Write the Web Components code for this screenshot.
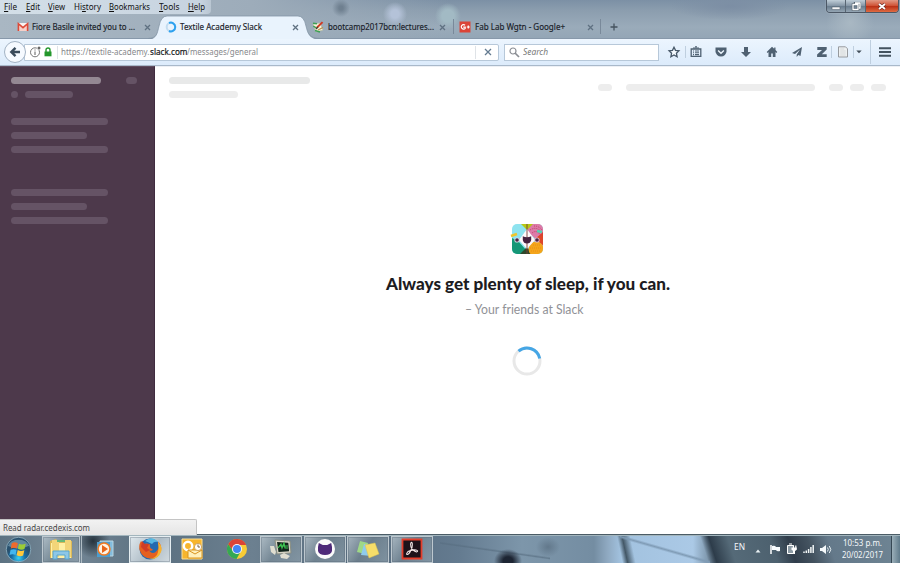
<!DOCTYPE html>
<html lang="en"><head><meta charset="utf-8"><title>Textile Academy Slack</title>
<style>html,body{margin:0;width:900px;height:563px;overflow:hidden;background:#fff;font-family:"Noto Sans","Open Sans",sans-serif}</style></head>
<body><desktop-screen></desktop-screen>
<script>
const define = (name, html, after) => customElements.define(name, class extends HTMLElement {
  connectedCallback() {
    if (this.shadowRoot) return;
    const t = document.createElement('template');
    t.innerHTML = html;
    this.attachShadow({mode:'open'}).append(t.content.cloneNode(true));
    if (after) after(this, this.shadowRoot);
  }
});

/* A single-line label condensed or widened to fill a given width. */
define('fit-text', `<style>:host{display:block;flex:none;white-space:nowrap}span{display:inline-block;transform-origin:0 50%}::slotted(u){text-underline-offset:1px;text-decoration-thickness:1px}</style><span><slot></slot></span>`, (h, r) => {
  const w = +h.getAttribute('w'), s = r.querySelector('span');
  h.style.width = w + 'px';
  s.style.transform = `scaleX(${w / s.getBoundingClientRect().width})`;
});

const icons = {
  close:['0 0 7 7','<path d="M1 1l5 5M6 1L1 6" stroke="#5f7182" stroke-width="1.3"/>'],
  stop:['0 0 8 8','<path d="M1 1l6 6M7 1L1 7" stroke="#647b90" stroke-width="1.3"/>'],
  gmail:['0 0 12 10','<path fill="#f8f4f2" d="M1 1h10v8H1z"/><path fill="#f5d0c9" d="M2 2l4 4 4-4v7H2z"/><path d="M1.4 9V1.7L6 5.7l4.6-4V9" fill="none" stroke="#dd4b39" stroke-width="1.6"/>'],
  spin:['0 0 12 12','<circle cx="6" cy="6" r="4.3" fill="none" stroke="#c3dcef" stroke-width="2"/><path d="M4 2A4.4 4.4 0 1 1 4 10" fill="none" stroke="#2da1ef" stroke-width="2"/>'],
  wiki:['0 0 12 12','<path fill="#f8f5dd" stroke="#b9bda0" stroke-width=".7" d="M1 3l7-1 3 7-7 2z"/><path d="M1 2.2l4 .6M1.3 5.2l3.4 2M3 9.5l5 1.5" stroke="#3fa056" fill="none" stroke-width="1.5"/><path d="M5 6.5l5.6-5.4" stroke="#d13a24" stroke-width="1.9"/><path d="M4 8l2-2" stroke="#49382d" stroke-width="1.3"/><path d="M6 9l5-2.5" stroke="#b78e4c" stroke-width="1.3"/>'],
  gplus:['0 0 12 12','<path fill="#db4437" d="M.5.5h11v11H.5z"/><path d="M6 4.3a2.2 2.2 0 1 0 .2 3V6.2H4.2M7.8 6h3M9.3 4.5v3" fill="none" stroke="#fff" stroke-width="1.2"/>'],
  plus:['0 0 8 8','<path d="M4 .5v7M.5 4h7" stroke="#46535f" stroke-width="1.3"/>'],
  back:['0 0 12 12','<path d="M6.5 1.8L2.3 6l4.2 4.2M2.6 6H11" fill="none" stroke="#3a4b5b" stroke-width="2.4"/>'],
  info:['0 0 12 12','<circle cx="5" cy="6.3" r="4.5" fill="none" stroke="#777" stroke-width="1"/><path d="M5 5.5V9M5 3.5v1.1" stroke="#777" stroke-width="1.2"/><circle cx="9" cy="2" r="2.1" fill="#fff"/><circle cx="9" cy="2" r="1.5" fill="#666"/>'],
  lock:['0 0 8 10','<path d="M2 5V3a2 2 0 0 1 4 0v2" fill="none" stroke="#24972c" stroke-width="1.4"/><path d="M.5 4.5h7v4.8h-7z" fill="#24972c"/>'],
  search:['0 0 11 11','<circle cx="4" cy="4" r="3" fill="none" stroke="#8b8e94" stroke-width="1.2"/><path d="M6 6l4 4" stroke="#8b8e94" stroke-width="1.7"/>'],
  star:['0 0 12 12','<path d="M6 1.2l1.5 3.2 3.4.4-2.5 2.4.7 3.5L6 9l-3.1 1.7.7-3.5L1.1 4.8l3.4-.4z" fill="#f6fbff" stroke="#465768" stroke-width="1.3"/>'],
  clip:['0 0 12 12','<path d="M1.2 3h9.6v7.4H1.2z" fill="none" stroke="#4f6172" stroke-width="1.3"/><path d="M3 2h6M5 .8h2M3 5h1m1 0h4M3 6.8h1m1 0h4M3 8.6h1m1 0h4" stroke="#4f6172" stroke-width="1.1"/>'],
  pocket:['0 0 12 12','<path d="M.5 1.5h11v3.8a5.5 5.3 0 0 1-11 0z" fill="#4f6172"/><path d="M3.1 4.6L6 7.3l2.9-2.7" fill="none" stroke="#eef6fe" stroke-width="1.4"/>'],
  down:['0 0 12 12','<path d="M4 1h4v5h3l-5 5-5-5h3z" fill="#4f6172"/>'],
  home:['0 0 12 12','<path d="M6 .8L.7 6l.9.9.9-.8V11h2.7V7.5h1.6V11h2.7V6.1l.9.8.9-.9L9.5 4V1.4H8.2v1.4z" fill="#4f6172"/>'],
  plane:['0 0 12 12','<path d="M11 1L1 7l3 1 5-4.4L5.7 8.5V11l1.6-1.9L9.5 10z" fill="#4f6172"/>'],
  z:['0 0 12 12','<path d="M1.3 1h9.4v2.5L5.8 8.2h4.9v2.9H1.1V8.6L6 3.9H1.3z" fill="#4f6172"/>'],
  page:['0 0 12 12','<path d="M1.5 .8h7l2 2V11h-9z" fill="#edf0f1" stroke="#96999d" stroke-width="1"/><path d="M3.2 3h4M3.2 5h5.5M3.2 7h5.5M3.2 9h5.5" stroke="#cfd2d4" stroke-width=".8"/>'],
  caret:['0 0 6 4','<path d="M.3.5h5.4L3 3.3z" fill="#404d58"/>'],
  menu:['0 0 12 10','<path d="M0 1.2h12M0 5h12M0 8.8h12" stroke="#44535f" stroke-width="1.9"/>'],
  slack:['0 0 34 32','<clipPath id="c"><rect x="2" y="1" width="31" height="30" rx="5"/></clipPath><g clip-path="url(#c)"><path fill="#8ee3ef" d="M2 1h31v30H2z"/><path fill="#159777" d="M0 14l8 4 9 10v4H0z"/><path fill="#dd7ba8" d="M20 0h14v24L17 8z"/><path fill="#de472a" d="M25 16l9-8v15z"/><path fill="#b6c814" d="M10 0h14l-7 7z"/><path fill="#30482b" d="M17 24l7 8H9z"/><circle cx="26" cy="26" r="7.5" fill="#f4a51b"/><g fill="none" stroke="#bc3d65" stroke-width=".9" stroke-dasharray="1 1"><path d="M20 7q8-5 13 5M22 10q5-4 9 3M24 3q5 0 8 4"/></g><path d="M20 25h12M21 28h10M23 22h8" stroke="#ed8e14" stroke-dasharray="1 1"/></g><path fill="#fff8fb" d="M17 6l8 11-8 9-8-9z"/><path d="M17 1v30" stroke="#783f35" stroke-width=".9"/><path fill="#45213f" d="M12.8 13.2q4.2 2 8.4 0V17q-.8 3.6-4.2 3.6T12.8 17z"/><g><circle cx="7" cy="17" r="2.6" fill="#d9dce5"/><circle cx="7" cy="17" r="1.8" fill="#4d2645"/><circle cx="27" cy="17" r="2.6" fill="#e6c1cf"/><circle cx="27" cy="17" r="1.8" fill="#4d2645"/></g><path d="M1 13l6-2" stroke="#efc52c" stroke-width="2.7"/><path d="M27 8l5 1" stroke="#54d2b2" stroke-width="2.6"/>'],
  load:['0 0 30 30','<circle cx="15" cy="15" r="13" fill="none" stroke="#e8e8e8" stroke-width="3"/><path d="M6.5 5.2A13 13 0 0 1 27.7 12.5" fill="none" stroke="#45a6e5" stroke-width="3"/>'],
  orb:['0 0 28 28','<defs><radialGradient id="g" cy=".85"><stop stop-color="#39d3f6"/><stop offset=".55" stop-color="#176da6"/><stop offset="1" stop-color="#29516e"/></radialGradient></defs><circle cx="14" cy="14" r="12.7" fill="url(#g)" stroke="#9abac9" stroke-width=".8"/><path d="M3 10a12 10 0 0 1 22 0q-11 6-22 0" fill="#b7d9e7" opacity=".4"/><path fill="#ef6a2c" d="M7 7.5q3-2 6.3 0l-1 5.4q-3-1.5-6.3 0z"/><path fill="#9bcc36" d="M14.5 8q3 1.7 7 0l-1.3 5.6q-3 1.5-6.8-.3z"/><path fill="#42b6ef" d="M5.8 14.3q3-1.3 6.3 0l-1.2 5.5q-3-1.5-6.3 0z"/><path fill="#ffc83b" d="M13.2 14.6q3 1.8 6.9.2l-1.3 5.5q-3 1.5-6.8-.3z"/>'],
  folder:['0 0 26 24','<path fill="#d9b85a" d="M2 4l6-2 2 2h14v17H2z"/><path fill="#fff0a5" d="M3 6h20v15H3z"/><path fill="#f2d579" d="M4 3h7v17H4zM17 3h6v17h-6z"/><path d="M9 4h8" stroke="#68b978" stroke-width="2"/><path fill="#8dc7e7" stroke="#57a6cf" d="M5 22v-8h16v8h-4v-4H9v4z"/>'],
  wmp:['0 0 20 20','<path fill="#82bcde" stroke="#b9d6e2" d="M5 2h13v15H5z"/><path fill="#4c9dce" d="M2 3h13v15H2z"/><circle cx="9" cy="10" r="6.7" fill="#f47b20"/><circle cx="9" cy="10" r="5.2" fill="#fff4e5"/><path fill="#e86518" d="M7 6l6 4-6 4z"/>'],
  firefox:['0 0 24 24','<circle cx="12" cy="12" r="10.5" fill="#256aaf"/><path d="M7 4q7-6 13 1-4-1-6 2-4-2-7-3" fill="#57b8e1"/><path fill="#e56020" d="M3 4q-3 5-1 10a11 11 0 0 0 21-.5q1-6-3-9 2 6-1 9-4 5-8 0 3 1 4-1-4-1-3-5-4-2-6 0z"/><path fill="#f7b32f" d="M20 5q5 5 3 10-3 8-12 7 8-1 9-7 1-4 0-10"/><path fill="#cf3d27" d="M4 4l3 3 4 0-2 4 3 2-4 2-5-5z"/>'],
  outlook:['0 0 24 24','<path fill="#f7b52d" stroke="#fbe19a" d="M2 2h20v20H2z"/><circle cx="8" cy="9" r="4.2" fill="none" stroke="#fff" stroke-width="2.5"/><path fill="#fff0bb" stroke="#db951d" d="M8 13h14v8H8z"/><path d="M8 13l7 4 7-4" fill="none" stroke="#d99420"/><circle cx="18" cy="10" r="3.6" fill="#fff" stroke="#d2a45a"/><path d="M18 7.5V10h2" fill="none" stroke="#7c6240"/>'],
  chrome:['0 0 22 22','<circle cx="11" cy="11" r="10" fill="#f8cc36"/><path fill="#db4437" d="M2.2 6.2A10 10 0 0 1 20.2 7H11L7 13z"/><path fill="#34a853" d="M2.2 6.2A10 10 0 0 0 10.5 21l4.2-7.6L7 13z"/><circle cx="11" cy="11" r="5" fill="#f7f7f7"/><circle cx="11" cy="11" r="4" fill="#4285f4"/>'],
  monitor:['0 0 24 22','<path fill="#d7d4c5" stroke="#898e82" d="M6 2l15 1 1 12-14 1z"/><path fill="#12251b" d="M8 4l11.3.8.8 8.4-10.6.9z"/><path d="M9 10l3-4 1 4 2-5 1 5h3M10 8h9" fill="none" stroke="#3ec551" stroke-width="1.2"/><path fill="#e0ded0" d="M11 17l4-2 6 3-3 3-6-1zM1 8h4l2 6-1 3-4-3z"/>'],
  cat:['0 0 22 22','<circle cx="11" cy="11" r="10" fill="#fafafa"/><path fill="#4e2a79" d="M4.8 5l4 2h4.4l4-2 .8 4v4q-1 4-7 4T4 13V9z"/>'],
  notes:['0 0 24 22','<path fill="#9fd886" d="M4 3l8 2-3 11-8-2z"/><path fill="#8fcbec" d="M8 6l8 1-1 11-10-1z"/><path fill="#f6dd69" stroke="#dac252" stroke-width=".5" d="M9 7l10-2 4 11-10 4z"/>'],
  acrobat:['0 0 22 22','<path fill="#1d1219" stroke="#e33e2b" stroke-width="1.8" d="M1.5 1.5h19v19h-19z"/><path d="M10 4.5q2-1 1 5-2 6-4.5 7-2 0 .5-3 4-2 8-1.5 3 1 .5 2-3.5-1-5.5-5-1-3 0-4.5" fill="none" stroke="#f2e8e7" stroke-width="1.1"/>'],
  up:['0 0 6 4','<path d="M.5 3.5h5L3 .5z" fill="#e9f1f4"/>'],
  flag:['0 0 11 11','<path d="M2 1v9" stroke="#fff" stroke-width="1.5"/><path fill="#f8fcff" d="M3 2q3-1 4 1h4v4q-3 1-4-1H3z"/>'],
  power:['0 0 11 12','<path d="M1.5 2.5h6v8h-6z" fill="#8c9aa4" stroke="#fff"/><path d="M3 1h3M7.5 2.5v3M9.8 2.5v3" stroke="#fff" fill="none" stroke-width="1.2"/><path d="M5.5 4.5h5.3v2.2L9 8v3H7.3V8L5.5 6.7z" fill="#fff"/>'],
  signal:['0 0 12 10','<path d="M1 9V7.5M3.3 9V6.5M5.6 9V5M7.9 9V3M10.2 9V1" stroke="#f1f5f6" stroke-width="1.5"/>'],
  sound:['0 0 12 11','<path fill="#f5f9fb" d="M0 4h2l4-3v9L2 7H0z"/><path d="M7.5 3.5q1.5 2 0 4M9.3 2q3 3.5 0 7" fill="none" stroke="#e7eff2"/>']
};
define('ui-icon', '<style>:host{display:block;flex:none}svg{display:block;width:100%;height:100%;overflow:visible}</style><svg></svg>', (h,r)=>{
  const [box,body]=icons[h.getAttribute('name')], v=box.split(' '), s=r.querySelector('svg');
  s.setAttribute('viewBox',box); s.innerHTML=body;
  h.style.width=(h.getAttribute('w')||v[2])+'px'; h.style.height=(h.getAttribute('h')||v[3])+'px';
});

define('menu-bar', `<style>:host{display:flex;align-items:center;width:207px;height:14px;padding-left:4px;box-sizing:content-box;font-size:8.7px;line-height:13px;color:#111;background:linear-gradient(90deg,#d3dfe8,#c7d3df 95%,#b9c6d2);border-radius:0 0 4px 0}
fit-text{margin-right:8.5px}</style>
<fit-text w="13"><u>F</u>ile</fit-text><fit-text w="14"><u>E</u>dit</fit-text><fit-text w="17"><u>V</u>iew</fit-text><fit-text w="27">Hi<u>s</u>tory</fit-text><fit-text w="41"><u>B</u>ookmarks</fit-text><fit-text w="20.5"><u>T</u>ools</fit-text><fit-text w="17"><u>H</u>elp</fit-text>`);

define('window-buttons', `<style>:host{display:flex;width:71px;height:12px;border:1px solid #4c5866;border-top:0;border-radius:0 0 4px 4px;overflow:hidden;box-shadow:0 0 1px #e5edf2}
div{display:grid;place-items:center;width:19px;background:linear-gradient(#c0ced8,#8495a5 48%,#687b8c 50%,#94a5b3);border-right:1px solid #586673}.x{width:33px;border:0;background:linear-gradient(#e19a85,#d05538 46%,#b82d13 50%,#df6b42)}svg{width:10px;height:9px}</style>
<div><svg><path d="M1 5h8v2.4H1z" fill="#fff" stroke="#52606d" stroke-width=".6"/></svg></div><div><svg><path d="M2 2.5h5v5H2zM4 2V1h5v5H8" fill="none" stroke="#4f5d69" stroke-width="2.4"/><path d="M2 2.5h5v5H2zM4 1h5v5H8" fill="none" stroke="#fff" stroke-width="1.3"/></svg></div><div class="x"><svg><path d="M2 2l6 5M8 2L2 7" stroke="#6c2b24" stroke-width="3"/><path d="M2 2l6 5M8 2L2 7" stroke="#fff" stroke-width="1.8"/></svg></div>`);

define('browser-tab', `<style>:host{display:flex;align-items:center;position:relative;isolation:isolate;height:24px;box-sizing:border-box;font-size:8.7px;color:#182028;-webkit-text-stroke:.15px #182028;padding-left:var(--pl,6px)}
::slotted(fit-text){margin:1px 0 0 var(--gap,4px);line-height:14px}.end{margin-left:auto;margin-right:var(--pr,9px)}ui-icon,::slotted(ui-icon){margin-top:2px}
.edge{display:none}:host([active]) .edge{display:block;position:absolute;z-index:-1;inset:0 0 -1px -9px;width:172px;height:26px}:host([sep])::after{content:"";width:1px;height:15px;background:#79899a}</style>
<svg class="edge" viewBox="0 0 172 26"><path d="M0 26C9 25 9 20 11 12Q13 2 19 2H150Q156 2 158 12C160 20 161 25 172 26z" fill="#e9f3fd"/><path d="M0 24.5C9 24 9 20 11 12Q13 2 19 2H150Q156 2 158 12C160 20 161 24 172 24.5" fill="none" stroke="#8495a6" stroke-width=".8"/></svg><slot></slot><ui-icon class="end" name="close"></ui-icon>`);

define('tab-strip', `<style>:host{display:flex;height:24px;border-bottom:1px solid #8798aa}browser-tab{flex:none}.plus{margin:9px 0 0 9px}</style>
<browser-tab style="width:157px;--pl:17px;--pr:6px;--gap:3px"><ui-icon name="gmail"></ui-icon><fit-text w="103">Fiore Basile invited you to ...</fit-text></browser-tab>
<browser-tab active style="width:149px;--pl:8px;--pr:7px;--gap:3px"><ui-icon name="spin"></ui-icon><fit-text w="82">Textile Academy Slack</fit-text></browser-tab>
<browser-tab sep style="width:148px;--pl:6px;--pr:7px"><ui-icon name="wiki"></ui-icon><fit-text w="106">bootcamp2017bcn:lectures...</fit-text></browser-tab>
<browser-tab sep style="width:147px;--pl:5px;--pr:6px"><ui-icon name="gplus"></ui-icon><fit-text w="90">Fab Lab Wgtn - Google+</fit-text></browser-tab>
<ui-icon class="plus" name="plus"></ui-icon>`);

define('address-field', `<style>:host{display:flex;align-items:center;width:475px;height:17px;box-sizing:border-box;border:1px solid #b7c8d9;background:#fff;padding-left:5px;font-size:8.7px;color:#86888b;border-radius:0 2px 2px 0}
i{width:1px;height:13px;background:#dfe3e7}fit-text{line-height:14px}.url{display:flex;margin-left:3px}.host{color:#17191b;-webkit-text-stroke:.2px #17191b}</style>
<ui-icon name="info"></ui-icon><ui-icon name="lock" style="margin:0 5px 0 2px"></ui-icon><i></i><div class="url"><fit-text w="88.5">https://textile-academy.</fit-text><fit-text class="host" w="37.5">slack.com</fit-text><fit-text w="71">/messages/general</fit-text></div><i style="margin-left:auto"></i><ui-icon name="stop" style="margin:0 6px 0 8px"></ui-icon>`);

define('tool-bar', `<style>:host{display:flex;align-items:center;height:27px;box-sizing:border-box;background:linear-gradient(#ecf5fe,#dcebfb);border-bottom:1px solid #a9b9ca;position:relative}
.back{display:grid;place-items:center;width:22px;height:22px;box-sizing:border-box;border:1px solid #a3b3c4;border-radius:50%;background:#f6faff;margin-left:4px;z-index:1}
address-field{margin-left:-2px}.search{display:flex;align-items:center;width:155px;height:17px;box-sizing:border-box;border:1px solid #b7c8d9;background:#fff;margin-left:5px;padding-left:4px;font:italic 8.7px/14px "Noto Sans",sans-serif;color:#777}
.tools{display:flex;align-items:center;margin-left:9px}.tools>ui-icon{margin-right:13.2px}i{width:1px;height:12px;background:#bfcfdf}.tall{height:24px}</style>
<div class="back"><ui-icon name="back"></ui-icon></div><address-field></address-field>
<div class="search"><ui-icon name="search"></ui-icon><fit-text w="25" style="margin-left:3px">Search</fit-text></div>
<div class="tools"><ui-icon name="star" style="margin-right:5px"></ui-icon><i style="margin-right:4px"></i><ui-icon name="clip"></ui-icon><ui-icon name="pocket"></ui-icon><ui-icon name="down"></ui-icon><ui-icon name="home"></ui-icon><ui-icon name="plane"></ui-icon><ui-icon name="z" style="margin-right:3px"></ui-icon><i style="margin-right:5px"></i><ui-icon name="page" style="margin-right:4px"></ui-icon><i style="margin-right:2px"></i><ui-icon name="caret" style="margin-right:8px"></ui-icon><i class="tall" style="margin-right:8px"></i><ui-icon name="menu" style="margin:0"></ui-icon></div>`);

define('browser-chrome', `<style>:host{display:block;height:66px;background:radial-gradient(circle at 341px 8px,#6f8090 0 2px,transparent 9px),radial-gradient(circle at 395px 14px,#b4c2d8 0 4px,transparent 12px),radial-gradient(circle at 448px 16px,#a2bac4 0 6px,transparent 13px),radial-gradient(circle at 850px 23px,#a9b8c3,transparent 24px),radial-gradient(ellipse 60px 14px at 730px 6px,#7c8ea4,transparent),linear-gradient(90deg,#a9b7c3 0,#9dacba 28%,transparent 50%),linear-gradient(#7c90a5,#8b9dae 10px,#9aabba 27px,#94a6b6 38px)}
header{display:flex;justify-content:space-between;height:14px}window-buttons{margin-right:1px}</style>
<header><menu-bar></menu-bar><window-buttons></window-buttons></header><tab-strip></tab-strip><tool-bar></tool-bar>`);

define('skeleton-line', '<style>:host{display:block;flex:none;height:7px;border-radius:4px;background:var(--line,#ededed)}</style>', h=>h.style.width=h.getAttribute('w')+'px');

define('slack-sidebar', `<style>:host{--line:#655365;display:block;width:155px;height:468px;box-sizing:border-box;background:#4d394b;padding:10px 0 0 11px;border-right:1px solid #402b3f;border-top:1px solid #604d60}
.row{display:flex;margin-bottom:7px}.group{display:grid;gap:7px;margin-top:20px}.group+.group{margin-top:36px}</style>
<div class="row"><skeleton-line w="90" style="--line:#948893;margin-right:25px"></skeleton-line><skeleton-line w="11"></skeleton-line></div><div class="row" style="margin:0"><skeleton-line w="7" style="margin-right:7px"></skeleton-line><skeleton-line w="48"></skeleton-line></div>
<div class="group"><skeleton-line w="97"></skeleton-line><skeleton-line w="76"></skeleton-line><skeleton-line w="97"></skeleton-line></div><div class="group"><skeleton-line w="97"></skeleton-line><skeleton-line w="76"></skeleton-line><skeleton-line w="97"></skeleton-line></div>`);

define('slack-loading', `<style>:host{display:flex;flex-direction:column;flex:1;background:#fff;border-top:1px solid #edf0f5;box-sizing:border-box}
header{display:flex;height:31px;padding:10px 14px 0 14px}.title{display:grid;gap:7px;align-content:start}.actions{display:flex;margin:7px 0 0 auto}
main{display:flex;flex-direction:column;align-items:center;margin-top:115px;font-family:Lato,sans-serif}main>ui-icon{margin-right:2px}h1{font-size:17px;line-height:22px;margin:18px 0 0;color:#1d1c22;font-weight:900}p{font-size:12.5px;line-height:18px;margin:6px 6px 0 0;color:#919297}main>ui-icon:last-child{margin-top:27px}</style>
<header><div class="title"><skeleton-line w="141" style="--line:#e8e9e9"></skeleton-line><skeleton-line w="69"></skeleton-line></div><div class="actions"><skeleton-line w="14" style="margin-right:14px"></skeleton-line><skeleton-line w="189" style="margin-right:14px"></skeleton-line><skeleton-line w="14" style="margin-right:7px"></skeleton-line><skeleton-line w="14" style="margin-right:7px"></skeleton-line><skeleton-line w="15"></skeleton-line></div></header>
<main><ui-icon name="slack"></ui-icon><h1><fit-text w="284">Always get plenty of sleep, if you can.</fit-text></h1><p><fit-text w="118.5">– Your friends at Slack</fit-text></p><ui-icon name="load"></ui-icon></main>`);

define('status-tip', '<style>:host{display:flex;align-items:center;position:absolute;left:0;top:519px;width:197px;height:16px;box-sizing:border-box;padding-left:3px;background:linear-gradient(#f2f2f2,#e5e5e5);border:1px solid #c4c4c4;border-left:0;border-bottom:0;border-radius:0 2px 0 0;font-size:8.7px;color:#444}</style><fit-text w="87">Read radar.cedexis.com</fit-text>');

define('task-button', `<style>:host{display:grid;place-items:center;flex:none;height:27px;width:43.5px;box-sizing:border-box}:host([open]){border:1px solid #bdc8cf;box-shadow:inset 0 0 0 1px #56677555;background:linear-gradient(125deg,#d2dde2a0,#7e909b88 45%,#98aab599)}:host([active]){border-color:#e6eef1;background:linear-gradient(125deg,#dfe8ed,#aebcc6 55%,#d2dbe1)}</style><slot></slot>`);

define('task-bar', `<style>:host{display:flex;align-items:center;height:29px;box-sizing:border-box;border-top:1px solid #4b5c66;box-shadow:inset 0 1px #a2b5bd;color:#f4f8fa;font-size:8.7px;line-height:11px;
background:radial-gradient(circle at 93px 6px,#26333d 0,transparent 17px),radial-gradient(ellipse 14px 12px at 508px 26px,#1d2533 0 35%,transparent),radial-gradient(ellipse 12px 10px at 548px 12px,#62788b,transparent),linear-gradient(8deg,transparent 44%,#576d80aa 47%,transparent 51%) 440px 0/110px 29px no-repeat,linear-gradient(16deg,transparent 46%,#7f9bb5 50%,transparent 54%) 620px 0/90px 29px no-repeat,linear-gradient(78deg,transparent 0 609px,#435766 614px,transparent 622px),linear-gradient(72deg,transparent 0 674px,#2d3c4a 682px,#556a78 700px,#4d616f 740px,#303d4b 757px,#43525f 775px,#64798a 795px,#6f8594),linear-gradient(90deg,#5c7282 0,#758897 7%,#5b7080 17%,#6c8090 28%,#55697b 40%,#647b90 51%,#7d96aa 58%,#748da2 66%,#8fa9c1 67.5%,#a2c2df 69%,#abc9e6 77%,#596e7d 80%,#526878 100%)}
.tray{display:flex;align-items:center;margin-left:auto}.clock{display:grid;gap:1px;justify-items:center;margin:1px 8px 0 0}.show{width:9px;height:27px;box-sizing:border-box;border-left:1px solid #364854;background:linear-gradient(90deg,#9aaeb8,#607b8b)}</style>
<ui-icon name="orb" w="27" h="27" style="margin:0 10px 0 5px"></ui-icon>
<task-button open style="width:38px"><ui-icon name="folder"></ui-icon></task-button><span style="height:27px;width:1px;border-right:1px solid #afbcc4"></span><task-button style="width:47px"><ui-icon name="wmp" style="margin-right:2px"></ui-icon></task-button><task-button open active style="width:42px"><ui-icon name="firefox" style="margin-right:1px"></ui-icon></task-button><task-button style="width:44px"><ui-icon name="outlook" style="margin-right:2px"></ui-icon></task-button><task-button style="width:45px"><ui-icon name="chrome" style="margin-right:2px"></ui-icon></task-button>
<task-button open style="width:42px;margin-right:1.5px"><ui-icon name="monitor"></ui-icon></task-button><task-button open style="width:42px;margin-right:1.5px"><ui-icon name="cat"></ui-icon></task-button><task-button open style="width:42px;margin-right:1.5px"><ui-icon name="notes"></ui-icon></task-button><task-button open style="width:42px"><ui-icon name="acrobat"></ui-icon></task-button>
<div class="tray"><fit-text w="11" style="margin:-3px 10px 0 0">EN</fit-text><ui-icon name="up" style="margin:3px 8px 0 0"></ui-icon><ui-icon name="flag" style="margin-right:6px"></ui-icon><ui-icon name="power" style="margin-right:6px"></ui-icon><ui-icon name="signal" style="margin-right:5px"></ui-icon><ui-icon name="sound" style="margin-right:10px"></ui-icon><div class="clock"><fit-text w="39">10:53 p.m.</fit-text><fit-text w="41">20/02/2017</fit-text></div><div class="show"></div></div>`);

define('desktop-screen', `<style>:host{display:block;position:relative;width:900px;height:563px;overflow:hidden}.page{display:flex;height:468px}</style><browser-chrome></browser-chrome><div class="page"><slack-sidebar></slack-sidebar><slack-loading></slack-loading></div><status-tip></status-tip><task-bar></task-bar>`);
</script></body></html>
